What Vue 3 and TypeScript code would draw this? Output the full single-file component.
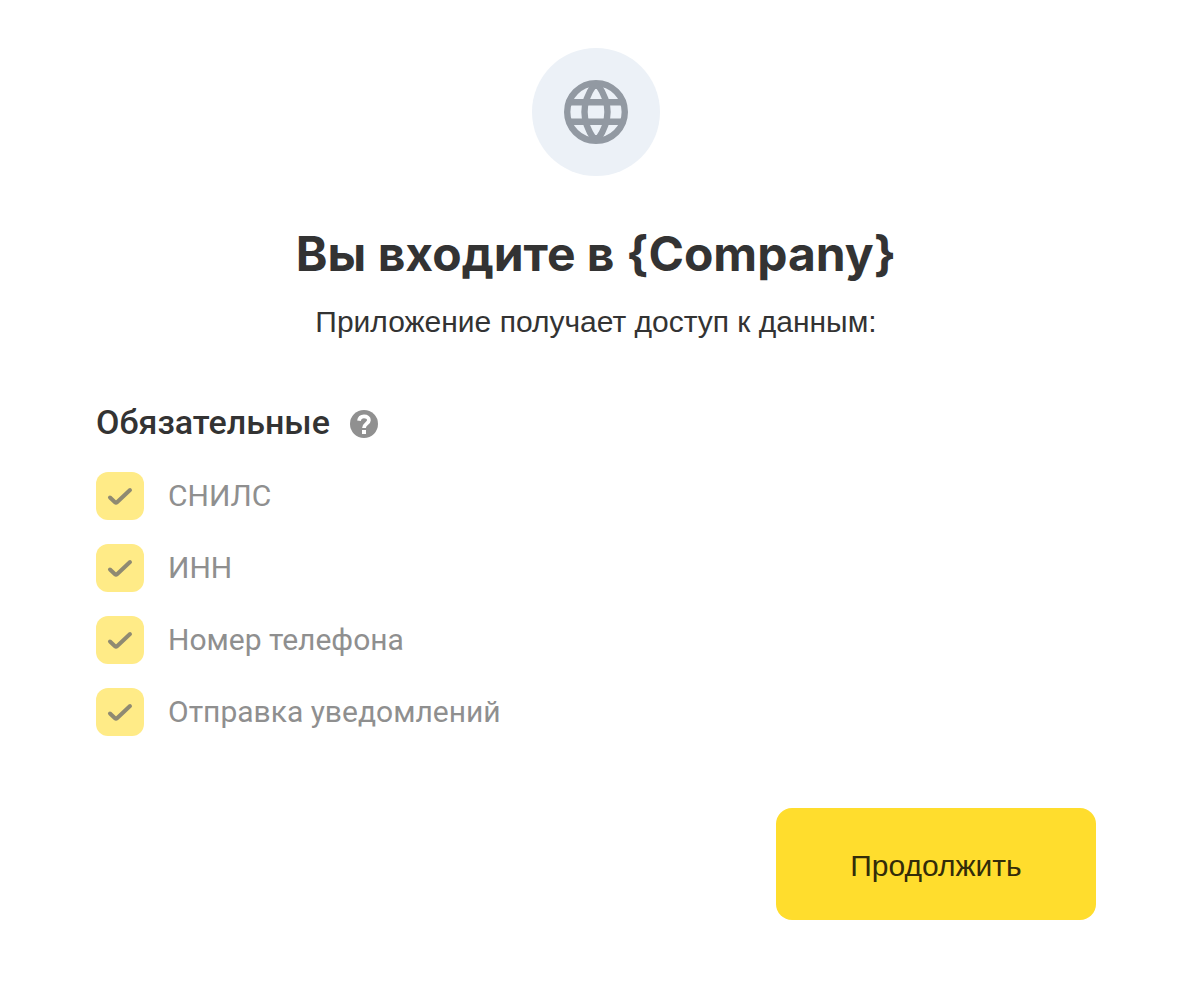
<script setup lang="ts">
import { ref } from 'vue'

interface Permission {
  id: string
  label: string
}

const company = ref('{Company}')
const permissions: Permission[] = [
  { id: 'snils', label: 'СНИЛС' },
  { id: 'inn', label: 'ИНН' },
  { id: 'phone', label: 'Номер телефона' },
  { id: 'notifications', label: 'Отправка уведомлений' },
]
</script>

<template>
  <main class="consent">
    <header class="intro">
      <div class="badge">
        <svg class="globe" viewBox="0 0 64 64" aria-hidden="true">
          <g fill="none" stroke="#9299a2" stroke-width="6.4">
            <circle cx="32" cy="32" r="28.8" />
            <path d="M6 22.2H58M6 41.8H58" />
            <path d="M30 5C24 13.5 20.5 22 20.5 32S24 50.5 30 59M34 5C40 13.5 43.5 22 43.5 32S40 50.5 34 59" />
            <path d="M32 6V9M32 55V58" stroke-width="3" />
          </g>
        </svg>
      </div>
      <h1 class="title">Вы входите в {{ company }}</h1>
      <p class="subtitle">Приложение получает доступ к данным:</p>
    </header>

    <form class="form" @submit.prevent>
      <section class="group" aria-labelledby="required-title">
        <div class="group-head">
          <h2 id="required-title" class="group-title">Обязательные</h2>
          <button class="help" type="button" aria-label="Подсказка">
            <svg class="help-icon" viewBox="0 0 28 28" aria-hidden="true">
              <circle cx="14" cy="14" r="14" fill="#909090" />
              <path d="M9 10.8C9.4 7.8 11.2 6.4 14 6.4C17 6.4 18.9 8 18.9 10.2C18.9 13.6 14 13.8 14 18" fill="none" stroke="#fff" stroke-width="3.8" />
              <rect x="12" y="20" width="4" height="4" fill="#fff" />
            </svg>
          </button>
        </div>
        <ul class="list">
          <li v-for="item in permissions" :key="item.id">
            <label class="option" :for="item.id">
              <span class="box">
                <input :id="item.id" class="check" type="checkbox" checked disabled />
                <svg class="tick" viewBox="0 0 48 48" aria-hidden="true">
                  <path d="M14 25.5L19 30.3Q20 31.2 21 30.3L34 18" fill="none" stroke="#8f8a72" stroke-width="4" stroke-linecap="round" stroke-linejoin="round" />
                </svg>
              </span>
              <span>{{ item.label }}</span>
            </label>
          </li>
        </ul>
      </section>
      <div class="actions">
        <button class="submit" type="submit">Продолжить</button>
      </div>
    </form>
  </main>
</template>

<style>
body {
  background: #fff;
}
</style>

<style scoped>
.consent {
  box-sizing: border-box;
  padding: 48px 96px 72px;
  color: #333;
  font-family: Roboto, "Liberation Sans", sans-serif;
}
.intro {
  display: flex;
  flex-direction: column;
  align-items: center;
  text-align: center;
}
.badge {
  display: grid;
  place-items: center;
  width: 128px;
  height: 128px;
  border-radius: 50%;
  background: #ecf1f7;
}
.globe {
  width: 64px;
  height: 64px;
}
.title {
  margin: 48px 0 0;
  font-family: Inter, sans-serif;
  font-size: 48px;
  font-weight: 700;
  line-height: 60px;
}
.subtitle {
  margin: 16px 0 0;
  font-family: "Liberation Sans", sans-serif;
  font-size: 30px;
  line-height: 44px;
}
.form {
  margin-top: 56px;
}
.group-head {
  display: flex;
  align-items: center;
  gap: 20px;
}
.group-title {
  margin: 0;
  padding-bottom: 4px;
  font-size: 34px;
  font-weight: 500;
  line-height: 44px;
}
.help {
  padding: 0;
  border: 0;
  background: none;
}
.help-icon {
  display: block;
  width: 28px;
  height: 28px;
}
.list {
  display: flex;
  flex-direction: column;
  gap: 24px;
  margin: 24px 0 0;
  padding: 0;
  list-style: none;
}
.option {
  display: flex;
  align-items: center;
  gap: 24px;
  color: #8f8f8f;
  font-size: 30px;
  line-height: 48px;
}
.box {
  display: grid;
  width: 48px;
  height: 48px;
}
.check,
.tick {
  grid-area: 1 / 1;
  width: 48px;
  height: 48px;
}
.check {
  appearance: none;
  margin: 0;
  border-radius: 12px;
  background: #ffeb87;
}
.actions {
  display: flex;
  justify-content: flex-end;
  margin-top: 72px;
}
.submit {
  width: 320px;
  height: 112px;
  padding: 4px 0 0;
  border: 0;
  border-radius: 16px;
  background: #ffdd2d;
  color: #332c09;
  font-family: "Liberation Sans", sans-serif;
  font-size: 30px;
  line-height: 48px;
}
</style>
